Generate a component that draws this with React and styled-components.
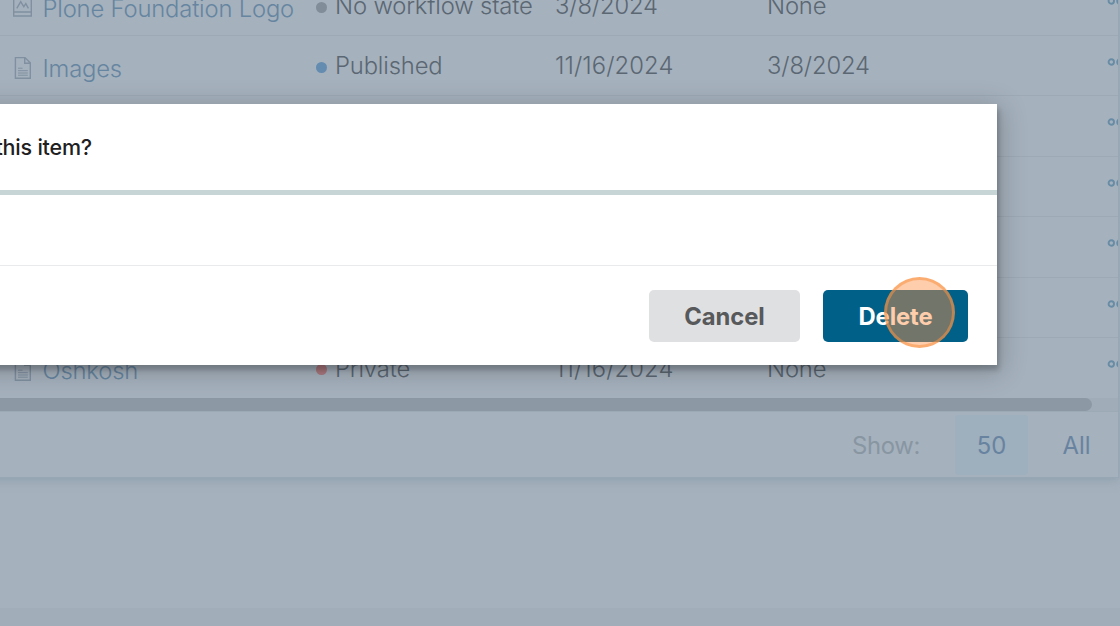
import React from "react";
import styled, { createGlobalStyle } from "styled-components";

const GlobalStyle = createGlobalStyle`
  * { box-sizing: border-box; }
  body { margin: 0; overflow: hidden; }
`;

const Page = styled.div`
  position: relative;
  width: 1120px;
  height: 626px;
  overflow: hidden;
  display: flex;
  flex-direction: column;
  background: #a5b1bd;
  font-family: Inter, sans-serif;
  font-weight: 300;
  font-size: 23.8px;
  line-height: 30px;
  color: #5b6772;
`;

const Panel = styled.section`
  flex: none;
  width: 1139px;
  height: 478px;
  margin-left: -20px;
  padding-left: 20px;
  overflow: hidden;
  display: flex;
  flex-direction: column;
  justify-content: flex-end;
  border-right: 1px solid #97a8b4;
  border-bottom: 1px solid #97a8b4;
  box-shadow: 0 2px 9px rgba(120, 144, 158, 0.5);
`;

const Row = styled.div`
  flex: none;
  height: ${(p) => (p.$last ? "60px" : "60.5px")};
  display: grid;
  grid-template-columns: 316px 239px 212px 340px 24px;
  border-bottom: 1px solid ${(p) => (p.$last ? "transparent" : "#9da9b5")};
`;

const NameCell = styled.div`
  display: flex;
  align-items: center;
  gap: 9px;
  padding: 5px 0 0 12px;
  color: #6685a0;
  white-space: nowrap;
  letter-spacing: -0.17px;
`;

const NameText = styled.span`
  padding-top: 2.5px;
  margin-left: -0.5px;
`;

const Cell = styled.div`
  display: flex;
  align-items: center;
  padding-top: 2px;
  white-space: nowrap;
  letter-spacing: ${(p) => p.$spacing || "-0.15px"};
`;

const StateDot = styled.span`
  flex: none;
  width: 11px;
  height: 11px;
  margin: 2.5px 8px 0 0;
  border-radius: 50%;
  background: ${(p) => p.$color};
`;

const MenuCell = styled.div`
  display: flex;
  padding-top: 22px;
`;

const ScrollTrack = styled.div`
  flex: none;
  height: 13px;
  background: #a0adb9;
`;

const ScrollThumb = styled.div`
  width: 1092px;
  height: 13px;
  border-radius: 0 7px 7px 0;
  background: #8d98a5;
`;

const Pager = styled.footer`
  flex: none;
  height: 66px;
  display: flex;
  justify-content: flex-end;
  align-items: center;
  border-top: 1px solid #9caab5;
  font-weight: 400;
  color: #8896a2;
`;

const PagerLabel = styled.span`
  padding-top: 2px;
  margin-right: 35px;
  letter-spacing: -0.3px;
`;

const PageSize = styled.span`
  height: 60px;
  width: ${(p) => p.$width};
  padding: 2px 0 0 ${(p) => p.$inset || "0"};
  display: flex;
  justify-content: center;
  align-items: center;
  border-radius: 4px;
  color: #6883a0;
  background: ${(p) => (p.$active ? "#9eafbd" : "transparent")};
`;

const BottomBand = styled.div`
  margin-top: auto;
  height: 18px;
  background: #a1adb8;
`;

const Modal = styled.div`
  position: absolute;
  top: 104px;
  left: -40px;
  width: 1037px;
  height: 261px;
  display: flex;
  flex-direction: column;
  background: #fff;
  box-shadow: 2px 5px 5px rgba(0, 0, 0, 0.2), 2px 5px 25px 3px rgba(0, 0, 0, 0.2);
`;

const ModalHeader = styled.header`
  height: 91px;
  padding: 28px 905px 0 0;
  display: flex;
  justify-content: flex-end;
  border-bottom: 5px solid #c7d5d7;
  font-size: 21.5px;
  letter-spacing: -0.2px;
  font-weight: 500;
  color: #1e2021;
  white-space: nowrap;
`;

const ModalActions = styled.div`
  margin-top: 70px;
  flex: 1;
  display: flex;
  justify-content: flex-end;
  gap: 23px;
  padding: 24px 29px 0 0;
  border-top: 1px solid #e9eaeb;
`;

const Button = styled.button`
  width: ${(p) => p.$width};
  height: 52px;
  padding: 0;
  border: 0;
  border-radius: 5px;
  font: 700 23.8px/52px Inter, sans-serif;
  letter-spacing: -0.1px;
  color: ${(p) => (p.$primary ? "#fff" : "#57595b")};
  background: ${(p) => (p.$primary ? "#006088" : "#dfe0e2")};
`;

const ButtonText = styled.span`
  display: block;
  padding-top: 1px;
  line-height: 51px;
`;

const ClickMarker = styled.div`
  position: absolute;
  left: 883.5px;
  top: 276.5px;
  width: 71px;
  height: 71px;
  border-radius: 50%;
  border: 3px solid rgba(249, 146, 66, 0.55);
  background: rgba(253, 144, 72, 0.45);
`;

const PageIcon = () => (
  <svg width="22" height="24" viewBox="0 0 22 24" fill="none" stroke="#8090a0" strokeWidth="1.4">
    <path d="M3.4 1.6H13L18.3 6.9V22.2H3.4Z M12.7 1.6V7.2H18.3" />
    <path d="M6 12.2H10.6 M6 14.7H15.8 M6 17H15.8 M6 19.2H15.8" strokeWidth="1" />
  </svg>
);

const ImageIcon = () => (
  <svg width="22" height="24" viewBox="0 0 22 24" fill="none" stroke="#8090a0" strokeWidth="1.4">
    <path d="M1.7 1.7H19.3V21H1.7Z M1.7 17H19.3" />
    <path d="M4.8 13.3L8.7 6.7L11.8 11.7L13.8 8.7L16.4 13.3" />
  </svg>
);

const MoreIcon = () => (
  <svg width="24" height="8" viewBox="0 0 24 8" fill="none" stroke="#688ca5" strokeWidth="1.9">
    <circle cx="4.3" cy="4" r="2.7" />
    <circle cx="12.9" cy="4" r="2.7" />
  </svg>
);

const rows = [
  { name: "Plone Foundation Logo", Icon: ImageIcon, state: "No workflow state", dot: "#818e99", date: "3/8/2024", expires: "None" },
  { name: "Images", Icon: PageIcon, state: "Published", dot: "#648cb0", date: "11/16/2024", expires: "3/8/2024" },
  {},
  {},
  {},
  {},
  { name: "Oshkosh", Icon: PageIcon, state: "Private", dot: "#ad7980", date: "11/16/2024", expires: "None" },
];

export default function App() {
  return (
    <>
      <GlobalStyle />
      <Page>
        <Panel>
          {rows.map(({ name, Icon, state, dot, date, expires }, i) => (
            <Row key={i} $last={i === rows.length - 1}>
              <NameCell>
                {Icon && <Icon />}
                {name && <NameText>{name}</NameText>}
              </NameCell>
              <Cell>
                {dot && <StateDot $color={dot} />}
                {state}
              </Cell>
              <Cell $spacing={date && date.startsWith("11") ? "0.1px" : undefined}>{date}</Cell>
              <Cell>{expires}</Cell>
              <MenuCell>
                <MoreIcon />
              </MenuCell>
            </Row>
          ))}
          <ScrollTrack>
            <ScrollThumb />
          </ScrollTrack>
          <Pager>
            <PagerLabel>Show:</PagerLabel>
            <PageSize $width="73px" $active>50</PageSize>
            <PageSize $width="90px" $inset="7px">All</PageSize>
          </Pager>
        </Panel>
        <BottomBand />
        <Modal>
          <ModalHeader>this item?</ModalHeader>
          <ModalActions>
            <Button $width="151px"><ButtonText>Cancel</ButtonText></Button>
            <Button $width="145px" $primary><ButtonText>Delete</ButtonText></Button>
          </ModalActions>
        </Modal>
        <ClickMarker />
      </Page>
    </>
  );
}
